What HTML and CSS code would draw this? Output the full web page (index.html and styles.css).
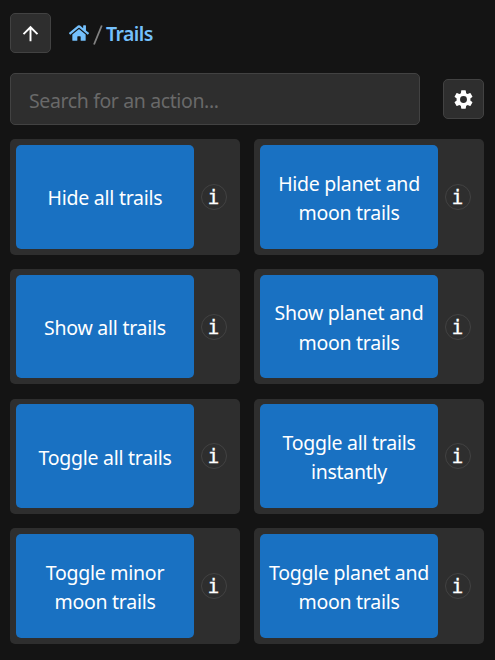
FILE: index.html
```html
<!DOCTYPE html>
<html lang="en">
<head>
<meta charset="utf-8">
<title>Trails</title>
<link rel="stylesheet" href="styles.css">
</head>
<body>
<header class="nav">
  <button class="square" aria-label="Up"><svg viewBox="0 0 24 24"><path d="M4 12l1.41 1.41L11 7.83V20h2V7.83l5.58 5.59L20 12l-8-8-8 8z"/></svg></button>
  <nav class="crumbs">
    <svg class="home" viewBox="0 0 576 512"><path d="M280.37 148.26L96 300.11V464a16 16 0 0 0 16 16l112.06-.29a16 16 0 0 0 15.92-16V368a16 16 0 0 1 16-16h64a16 16 0 0 1 16 16v95.64a16 16 0 0 0 16 16.05L464 480a16 16 0 0 0 16-16V300L295.67 148.26a12.19 12.19 0 0 0-15.3 0zM571.6 251.47L488 182.56V44.05a12 12 0 0 0-12-12h-56a12 12 0 0 0-12 12v72.61L318.47 43a48 48 0 0 0-61 0L4.34 251.47a12 12 0 0 0-1.6 16.9l25.5 31A12 12 0 0 0 45.15 301l235.22-193.74a12.19 12.19 0 0 1 15.3 0L530.9 301a12 12 0 0 0 16.9-1.6l25.5-31a12 12 0 0 0-1.7-16.93z"/></svg>
    <svg class="slash" viewBox="0 0 10 20"><path d="M1 19.5 8.8 .5"/></svg>
    <span class="current">Trails</span>
  </nav>
</header>
<div class="tools">
  <input class="search" type="text" placeholder="Search for an action...">
  <button class="square" aria-label="Settings"><svg viewBox="0 0 24 24"><path d="M19.14 12.94c.04-.3.06-.61.06-.94 0-.32-.02-.64-.07-.94l2.03-1.58a.49.49 0 0 0 .12-.61l-1.92-3.32a.488.488 0 0 0-.59-.22l-2.39.96c-.5-.38-1.03-.7-1.62-.94l-.36-2.54a.484.484 0 0 0-.48-.41h-3.84c-.24 0-.43.17-.47.41l-.36 2.54c-.59.24-1.13.57-1.62.94l-2.39-.96c-.22-.08-.47 0-.59.22L2.74 8.87c-.12.21-.08.47.12.61l2.03 1.58c-.05.3-.09.63-.09.94s.02.64.07.94l-2.03 1.58a.49.49 0 0 0-.12.61l1.92 3.32c.12.22.37.29.59.22l2.39-.96c.5.38 1.03.7 1.62.94l.36 2.54c.05.24.24.41.48.41h3.84c.24 0 .44-.17.47-.41l.36-2.54c.59-.24 1.13-.56 1.62-.94l2.39.96c.22.08.47 0 .59-.22l1.92-3.32c.12-.22.07-.47-.12-.61l-2.01-1.58zM12 15.6A3.6 3.6 0 1 1 12 8.4a3.6 3.6 0 0 1 0 7.2z"/></svg></button>
</div>
<main class="grid">
  <div class="card"><button class="action">Hide all trails</button><span class="info">i</span></div>
  <div class="card"><button class="action">Hide planet and<br>moon trails</button><span class="info">i</span></div>
  <div class="card"><button class="action">Show all trails</button><span class="info">i</span></div>
  <div class="card"><button class="action">Show planet and<br>moon trails</button><span class="info">i</span></div>
  <div class="card"><button class="action">Toggle all trails</button><span class="info">i</span></div>
  <div class="card"><button class="action">Toggle all trails<br>instantly</button><span class="info">i</span></div>
  <div class="card"><button class="action">Toggle minor<br>moon trails</button><span class="info">i</span></div>
  <div class="card"><button class="action">Toggle planet and<br>moon trails</button><span class="info">i</span></div>
</main>
</body>
</html>
```
FILE: styles.css
```css
* { box-sizing: border-box; }
body {
  margin: 0;
  padding: 13px 11px 0 10px;
  height: 660px;
  overflow: hidden;
  background: #141414;
  color: #fff;
  font: 19.5px/29.3px "Segoe UI", "Noto Sans", sans-serif;
}
button, input { font: inherit; color: inherit; margin: 0; }
.nav { display: flex; align-items: center; height: 40px; }
.square {
  display: flex;
  align-items: center;
  justify-content: center;
  width: 41px;
  height: 40px;
  padding: 0;
  background: #2e2e2e;
  border: 1px solid #424242;
  border-radius: 5px;
}
.square svg { width: 23px; height: 23px; fill: #fff; }
.crumbs { display: flex; align-items: center; margin-left: 18px; }
.home { width: 20px; height: 18px; fill: #74c0fc; }
.slash { width: 10px; height: 20px; margin: 4px 3px 0 4px; fill: none; stroke: #828282; stroke-width: 1.8; }
.current { color: #74c0fc; font-weight: 600; letter-spacing: -0.6px; padding-top: 2px; }
.tools { display: flex; align-items: center; justify-content: space-between; margin-top: 20px; }
.search {
  width: 410px;
  height: 52px;
  padding: 2px 18px 0;
  background: #2e2e2e;
  border: 1px solid #424242;
  border-radius: 5px;
  letter-spacing: -0.38px;
}
.search::placeholder { color: #696969; opacity: 1; }
.grid {
  display: grid;
  grid-template-columns: 230px 230px;
  grid-auto-rows: 115.4px;
  gap: 14.3px 14px;
  margin-top: 14.2px;
}
.card {
  display: flex;
  align-items: center;
  padding: 6px;
  background: #2e2e2e;
  border-radius: 5px;
}
.action {
  width: 178px;
  height: 103.6px;
  padding: 2px 0 0;
  background: #1971c2;
  border: 0;
  border-radius: 5px;
  letter-spacing: -0.26px;
  white-space: nowrap;
}
.info {
  display: flex;
  align-items: center;
  justify-content: center;
  width: 26px;
  height: 26px;
  margin-left: 7px;
  padding-right: 1px;
  border: 1px solid #424242;
  border-radius: 50%;
  font: 19px/24px "DejaVu Sans Mono", monospace;
  -webkit-text-stroke: 0.4px #fff;
}
```
